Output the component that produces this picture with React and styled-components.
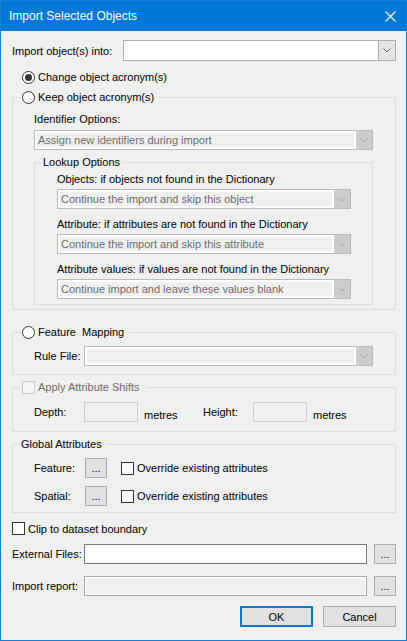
import React from "react";
import styled, { createGlobalStyle } from "styled-components";

const Global = createGlobalStyle`
  html, body { margin: 0; padding: 0; background: #f0f0f0; }
  body { font-family: "Liberation Sans", Arial, sans-serif; font-size: 11px; color: #000; }
  * { box-sizing: border-box; }
`;

const Window = styled.div`
  width: 407px;
  height: 641px;
  border: 1px solid #1a7fd6;
  background: #f0f0f0;
  display: flex;
  flex-direction: column;
`;

const TitleBar = styled.div`
  height: 30px;
  flex-shrink: 0;
  background: #0078d7;
  color: #fff;
  display: flex;
  align-items: center;
  padding-left: 8px;
  padding-right: 10px;
  font-size: 12px;
`;

const Title = styled.span`
  flex: 1;
`;

const Body = styled.div`
  display: flex;
  flex-direction: column;
  padding: 0 10px 0 11px;
`;

const Row = styled.div`
  display: flex;
  align-items: center;
  height: ${(p) => p.$h || 20}px;
  margin-top: ${(p) => p.$mt || 0}px;
`;

const Label = styled.span`
  width: ${(p) => (p.$w ? `${p.$w}px` : "auto")};
  flex-shrink: 0;
  line-height: 14px;
  white-space: nowrap;
`;

const Caption = styled.div`
  line-height: 14px;
  height: 14px;
  margin-top: ${(p) => p.$mt || 0}px;
  white-space: nowrap;
`;

const Option = styled.div`
  display: flex;
  align-items: center;
  gap: 3px;
  height: 13px;
  line-height: 13px;
  margin-top: ${(p) => p.$mt || 0}px;
  margin-left: ${(p) => p.$ml || 0}px;
  white-space: nowrap;
`;

const Radio = styled.span`
  position: relative;
  width: 13px;
  height: 13px;
  flex-shrink: 0;
  border: 1px solid #333;
  border-radius: 50%;
  background: #fff;
  &::after {
    content: "";
    display: ${(p) => (p.$checked ? "block" : "none")};
    position: absolute;
    inset: 2px;
    border-radius: 50%;
    background: #333;
  }
`;

const Check = styled.span`
  width: 13px;
  height: 13px;
  flex-shrink: 0;
  border: 1px solid ${(p) => (p.$disabled ? "#cccccc" : "#333")};
  background: ${(p) => (p.$disabled ? "#f4f4f4" : "#fff")};
  margin-left: ${(p) => p.$ml || 0}px;
  margin-right: ${(p) => (p.$mr === undefined ? 3 : p.$mr)}px;
`;

const Group = styled.div`
  border: 1px solid #dcdcdc;
  margin-top: ${(p) => p.$mt || 0}px;
  padding: ${(p) => p.$pad};
  display: flex;
  flex-direction: column;
`;

/* legend sits on the top border; $ml is negative to pull it out of the group's padding */
const Legend = styled.div`
  display: flex;
  align-items: center;
  gap: 3px;
  width: fit-content;
  height: 13px;
  line-height: 13px;
  margin-top: -7px;
  margin-left: ${(p) => p.$ml}px;
  padding: ${(p) => p.$pad};
  background: #f0f0f0;
  white-space: nowrap;
  color: ${(p) => (p.$disabled ? "#6d6d6d" : "#000")};
`;

const ComboBox = styled.div`
  display: flex;
  flex: ${(p) => (p.$inRow ? "1" : "none")};
  min-width: 0;
  height: ${(p) => p.$h || 20}px;
  margin-top: ${(p) => p.$mt || 0}px;
  border: 1px solid ${(p) => (p.$disabled ? "#bcbcbc" : "#adadad")};
  background: ${(p) => (p.$disabled ? "#cccccc" : "#fff")};
`;

const ComboField = styled.div`
  flex: 1;
  min-width: 0;
  display: flex;
  align-items: center;
  padding-left: ${(p) => (p.$disabled ? 1 : 3)}px;
  background: ${(p) => (p.$disabled ? "#f0f0f0" : "#fff")};
  border: ${(p) => (p.$disabled ? "2px solid #fff" : "none")};
  color: #6d6d6d;
  white-space: nowrap;
  overflow: hidden;
`;

const ComboButton = styled.div`
  width: ${(p) => (p.$disabled ? 16 : 17)}px;
  flex-shrink: 0;
  display: flex;
  align-items: center;
  justify-content: center;
  background: ${(p) => (p.$disabled ? "#cccccc" : "#e5e5e5")};
  border-left: ${(p) => (p.$disabled ? "none" : "1px solid #adadad")};
`;

const TextBox = styled.div`
  height: 20px;
  width: ${(p) => (p.$w ? `${p.$w}px` : "auto")};
  flex: ${(p) => (p.$w ? "none" : "1")};
  min-width: 0;
  border: 1px solid
    ${(p) =>
      p.$variant === "disabled" ? "#cccccc" : p.$variant === "readonly" ? "#a8a8a8" : "#7a7a7a"};
  background: ${(p) => (p.$variant === "enabled" ? "#fff" : "#f0f0f0")};
  box-shadow: ${(p) => (p.$variant === "readonly" ? "inset 0 0 0 1px #fff" : "none")};
`;

const Unit = styled.span`
  align-self: flex-end;
  line-height: 14px;
  width: ${(p) => (p.$w ? `${p.$w}px` : "auto")};
  margin-left: 6px;
  flex-shrink: 0;
`;

const DotsButton = styled.div`
  width: 22px;
  height: 20px;
  flex-shrink: 0;
  margin-left: ${(p) => p.$ml || 0}px;
  background: #e1e1e1;
  border: 1px solid #adadad;
  display: flex;
  align-items: center;
  justify-content: center;
  line-height: 12px;
  padding-bottom: 1px;
`;

const ButtonBar = styled.div`
  display: flex;
  justify-content: flex-end;
  gap: 10px;
  margin-top: 10px;
`;

const DialogButton = styled.div`
  width: 73px;
  height: 21px;
  background: #e1e1e1;
  border: ${(p) => (p.$default ? "2px solid #0078d7" : "1px solid #adadad")};
  display: flex;
  align-items: center;
  justify-content: center;
`;

const Chevron = ({ color }) => (
  <svg width="8" height="5" viewBox="0 0 8 5">
    <polyline points="0.5,0.5 4,4 7.5,0.5" fill="none" stroke={color} strokeWidth="1" />
  </svg>
);

const CloseIcon = () => (
  <svg width="11" height="11" viewBox="0 0 11 11">
    <path d="M0.5 0.5 L10.5 10.5 M10.5 0.5 L0.5 10.5" stroke="#fff" strokeWidth="1.1" fill="none" />
  </svg>
);

const Combo = ({ disabled, value, mt, h, inRow }) => (
  <ComboBox $disabled={disabled} $mt={mt} $h={h} $inRow={inRow}>
    <ComboField $disabled={disabled}>{value}</ComboField>
    <ComboButton $disabled={disabled}>
      <Chevron color={disabled ? "#a8a8a8" : "#606060"} />
    </ComboButton>
  </ComboBox>
);

const lookups = [
  ["Objects: if objects not found in the Dictionary", "Continue the import and skip this object", 3],
  ["Attribute: if attributes are not found in the Dictionary", "Continue the import and skip this attribute", 8],
  ["Attribute values: if values are not found in the Dictionary", "Continue import and leave these values blank", 8],
];

export default function App() {
  return (
    <>
      <Global />
      <Window>
        <TitleBar>
          <Title>Import Selected Objects</Title>
          <CloseIcon />
        </TitleBar>
        <Body>
          <Row $mt={9} $h={21}>
            <Label $w={111}>Import object(s) into:</Label>
            <Combo inRow h={21} />
          </Row>

          <Option $mt={10} $ml={10}>
            <Radio $checked />
            Change object acronym(s)
          </Option>

          <Group $mt={13} $pad="0 22px 4px 21px">
            <Legend $ml={-13} $pad="0 5px 0 1px">
              <Radio />
              Keep object acronym(s)
            </Legend>
            <Caption $mt={8}>Identifier Options:</Caption>
            <Combo disabled mt={4} value="Assign new identifiers during import" />

            <Group $mt={12} $pad="0 21px 5px 22px">
              <Legend $ml={-16} $pad="0 3px 0 2px">
                Lookup Options
              </Legend>
              {lookups.map(([cap, val, mt]) => (
                <React.Fragment key={cap}>
                  <Caption $mt={mt}>{cap}</Caption>
                  <Combo disabled mt={3} value={val} />
                </React.Fragment>
              ))}
            </Group>
          </Group>

          <Group $mt={22} $pad="0 22px 8px 21px">
            <Legend $ml={-13} $pad="0 5px 0 1px">
              <Radio />
              {"Feature\u00a0\u00a0Mapping"}
            </Legend>
            <Row $mt={7}>
              <Label $w={50}>Rule File:</Label>
              <Combo disabled inRow />
            </Row>
          </Group>

          <Group $mt={12} $pad="0 22px 9px 21px">
            <Legend $ml={-13} $pad="0 6px 0 1px" $disabled>
              <Check $disabled $mr={0} />
              Apply Attribute Shifts
            </Legend>
            <Row $mt={8}>
              <Label $w={50}>Depth:</Label>
              <TextBox $w={54} $variant="disabled" />
              <Unit $w={59}>metres</Unit>
              <Label $w={50}>Height:</Label>
              <TextBox $w={54} $variant="disabled" />
              <Unit>metres</Unit>
            </Row>
          </Group>

          <Group $mt={12} $pad="0 22px 6px 21px">
            <Legend $ml={-15} $pad="0 4px 0 2px">
              Global Attributes
            </Legend>
            <Row $mt={7}>
              <Label $w={51}>Feature:</Label>
              <DotsButton>...</DotsButton>
              <Check $ml={14} />
              <Label>Override existing attributes</Label>
            </Row>
            <Row $mt={8}>
              <Label $w={51}>Spatial:</Label>
              <DotsButton>...</DotsButton>
              <Check $ml={14} />
              <Label>Override existing attributes</Label>
            </Row>
          </Group>

          <Row $mt={9} $h={13}>
            <Check />
            <Label>Clip to dataset boundary</Label>
          </Row>

          <Row $mt={9}>
            <Label $w={72}>External Files:</Label>
            <TextBox $variant="enabled" />
            <DotsButton $ml={7}>...</DotsButton>
          </Row>

          <Row $mt={12}>
            <Label $w={72}>Import report:</Label>
            <TextBox $variant="readonly" />
            <DotsButton $ml={7}>...</DotsButton>
          </Row>

          <ButtonBar>
            <DialogButton $default>OK</DialogButton>
            <DialogButton>Cancel</DialogButton>
          </ButtonBar>
        </Body>
      </Window>
    </>
  );
}
